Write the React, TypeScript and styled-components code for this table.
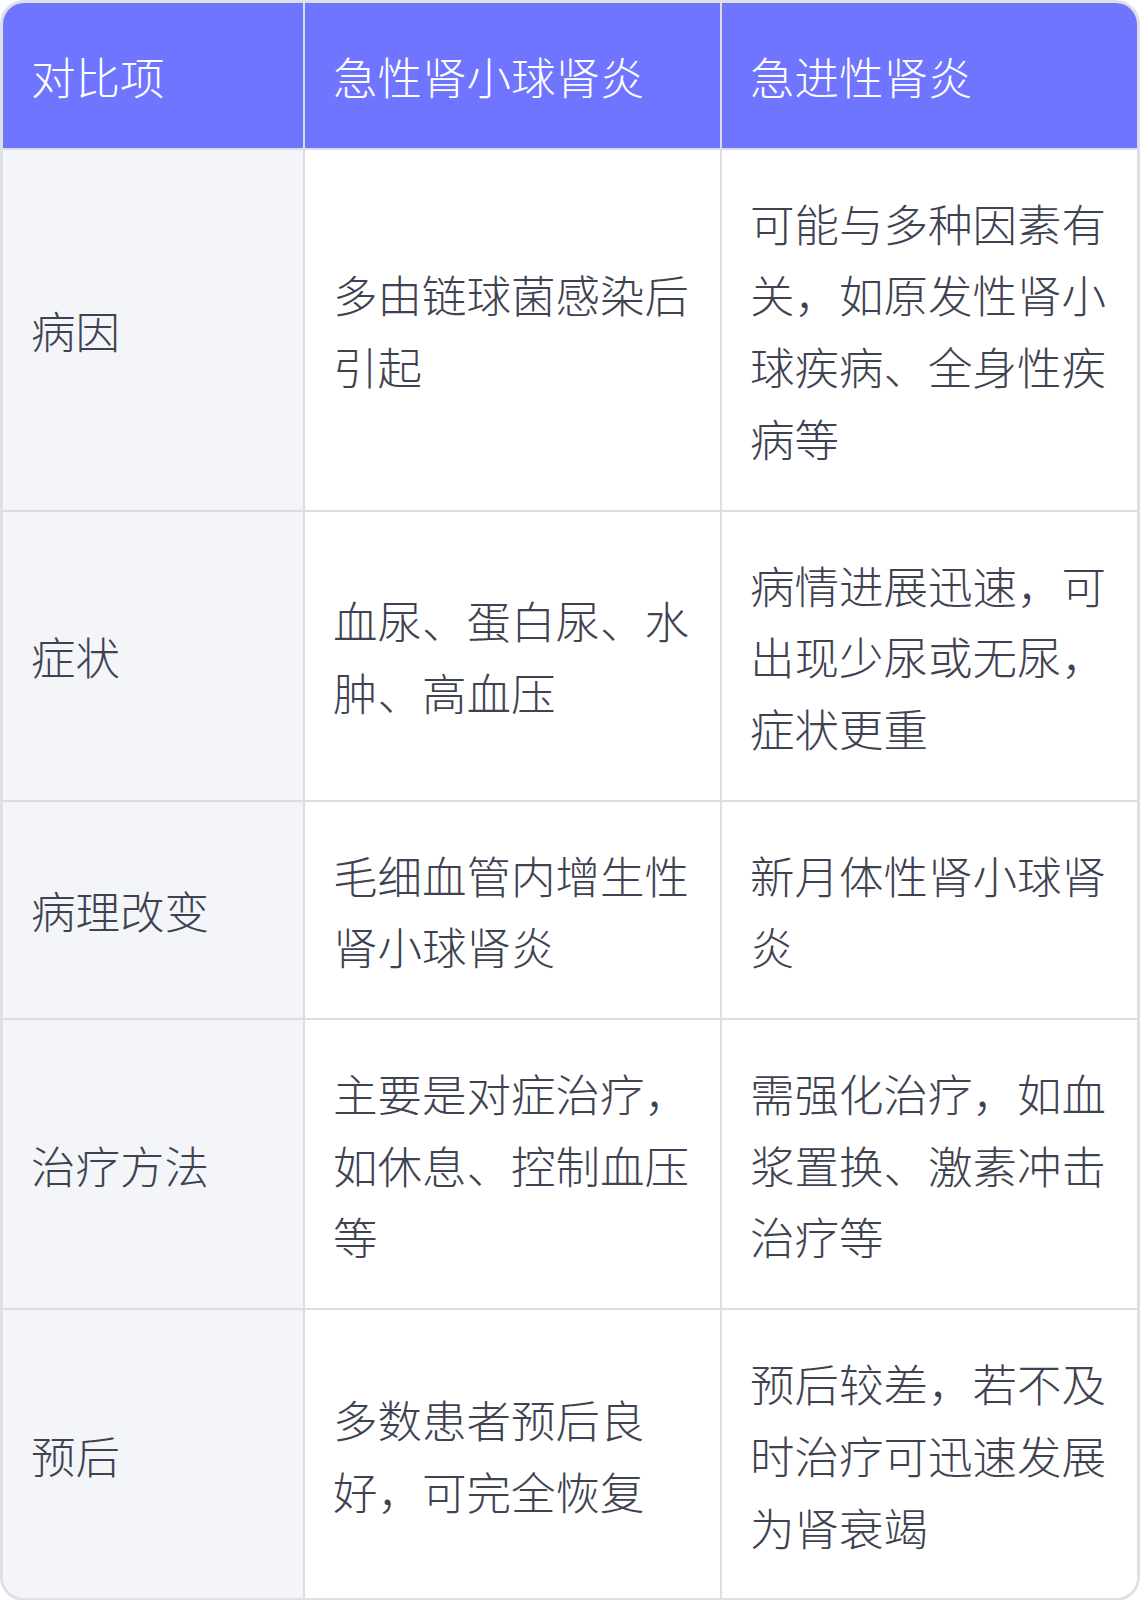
import React from "react";
import styled, { createGlobalStyle } from "styled-components";

const Global = createGlobalStyle`
  html, body { margin: 0; padding: 0; background: #ffffff; }
  body { font-family: "Noto Sans CJK SC", "Noto Sans", sans-serif; }
`;

const Table = styled.div`
  display: grid;
  grid-template-columns: 302px 417px 1fr;
  width: 1140px;
  box-sizing: border-box;
  border: 3px solid #dfe0e6;
  border-radius: 24px;
  overflow: hidden;
  background: #ffffff;
`;

const Cell = styled.div<{ $head?: boolean; $label?: boolean; $last?: boolean; $bottom?: boolean }>`
  box-sizing: border-box;
  display: flex;
  align-items: center;
  padding: 37px 22px 36px 28px;
  font-size: 44.5px;
  line-height: 71.7px;
  font-weight: 300;
  color: ${(p) => (p.$head ? "#ffffff" : "#3e4251")};
  background: ${(p) => (p.$head ? "#7075ff" : p.$label ? "#f4f5f9" : "#ffffff")};
  border-right: ${(p) => (p.$last ? "none" : "2px solid #dcdde3")};
  border-bottom: ${(p) => (p.$bottom ? "none" : "2px solid #dcdde3")};
  word-break: break-all;
`;

const header = ["对比项", "急性肾小球肾炎", "急进性肾炎"];
const rows: [string, string, string][] = [
  ["病因", "多由链球菌感染后引起", "可能与多种因素有关，如原发性肾小球疾病、全身性疾病等"],
  ["症状", "血尿、蛋白尿、水肿、高血压", "病情进展迅速，可出现少尿或无尿，症状更重"],
  ["病理改变", "毛细血管内增生性肾小球肾炎", "新月体性肾小球肾炎"],
  ["治疗方法", "主要是对症治疗，如休息、控制血压等", "需强化治疗，如血浆置换、激素冲击治疗等"],
  ["预后", "多数患者预后良好，可完全恢复", "预后较差，若不及时治疗可迅速发展为肾衰竭"],
];

export default function App() {
  return (
    <>
      <Global />
      <Table>
        {header.map((h, i) => (
          <Cell key={h} $head $last={i === 2}>
            {h}
          </Cell>
        ))}
        {rows.map((r, ri) =>
          r.map((c, ci) => (
            <Cell
              key={`${ri}-${ci}`}
              $label={ci === 0}
              $last={ci === 2}
              $bottom={ri === rows.length - 1}
            >
              {c}
            </Cell>
          ))
        )}
      </Table>
    </>
  );
}
